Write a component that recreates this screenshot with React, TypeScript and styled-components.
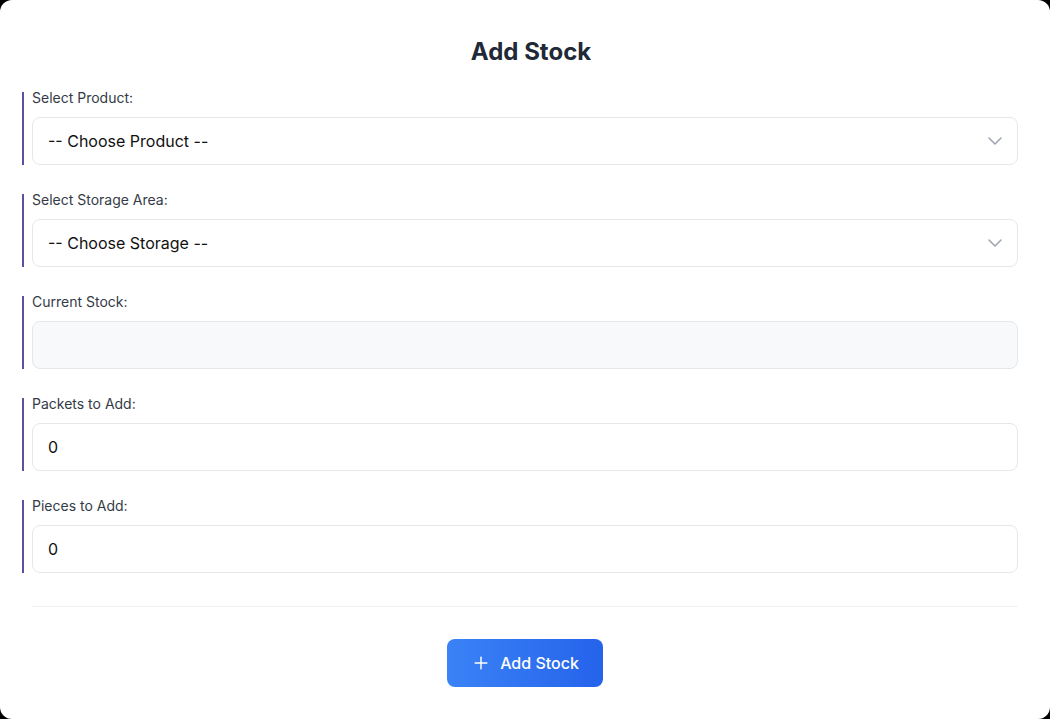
import React from 'react';
import styled, { createGlobalStyle } from 'styled-components';
import { ChevronDown, Plus } from 'lucide-react';

const GlobalStyle = createGlobalStyle`
  html, body {
    margin: 0;
    padding: 0;
    background: #000;
  }
  body {
    font-family: Inter, "Noto Sans", sans-serif;
    -webkit-font-smoothing: antialiased;
  }
  * {
    box-sizing: border-box;
  }
`;

const Card = styled.div`
  width: 1050px;
  height: 719px;
  background: #fff;
  border-radius: 12px;
  padding: 38px 32px 0 22px;
  display: flex;
  flex-direction: column;
`;

const Title = styled.h2`
  margin: 0 0 26px 22px;
  font-size: 24px;
  line-height: 28px;
  font-weight: 700;
  color: #1f2937;
  text-align: center;
`;

const Group = styled.div`
  display: flex;
  flex-direction: column;
  border-left: 2px solid #5e4fa2;
  padding-left: 8px;
  margin-bottom: 29px;
`;

const Label = styled.label`
  font-size: 14px;
  line-height: 11px;
  font-weight: 400;
  color: #343b47;
  margin-bottom: 14px;
`;

const Field = styled.div<{ $readOnly?: boolean }>`
  height: 48px;
  border: 1px solid #e5e7eb;
  border-radius: 8px;
  background: ${({ $readOnly }) => ($readOnly ? '#f8f9fb' : '#fff')};
  display: flex;
  align-items: center;
  padding: 0 10px 0 15px;
  font-size: 16px;
  color: #111;
`;

const Value = styled.span`
  flex: 1;
`;

const Chevron = styled(ChevronDown)`
  color: #9ca3af;
`;

const Divider = styled.hr`
  margin: 4px 0 32px 10px;
  border: none;
  border-top: 1px solid #f0f1f3;
`;

const Footer = styled.div`
  display: flex;
  justify-content: center;
  padding-left: 10px;
`;

const Button = styled.button`
  display: flex;
  align-items: center;
  gap: 9px;
  height: 48px;
  padding: 0 24px;
  border: none;
  border-radius: 8px;
  background: linear-gradient(90deg, #3b82f6 0%, #2563eb 100%);
  color: #fff;
  font-family: Inter, "Noto Sans", sans-serif;
  font-size: 16px;
  font-weight: 500;
  cursor: pointer;
`;

type FieldDef = {
  label: string
  value?: string
  select?: boolean
  readOnly?: boolean
};

const fields: FieldDef[] = [
  { label: 'Select Product:', value: '-- Choose Product --', select: true },
  { label: 'Select Storage Area:', value: '-- Choose Storage --', select: true },
  { label: 'Current Stock:', readOnly: true },
  { label: 'Packets to Add:', value: '0' },
  { label: 'Pieces to Add:', value: '0' },
];

export default function App() {
  return (
    <>
      <GlobalStyle />
      <Card>
        <Title>Add Stock</Title>
        {fields.map((f) => (
          <Group key={f.label}>
            <Label>{f.label}</Label>
            <Field $readOnly={f.readOnly}>
              <Value>{f.value}</Value>
              {f.select ? <Chevron size={24} strokeWidth={1.5} /> : null}
            </Field>
          </Group>
        ))}
        <Divider />
        <Footer>
          <Button>
            <Plus size={20} strokeWidth={1.75} />
            Add Stock
          </Button>
        </Footer>
      </Card>
    </>
  );
}
